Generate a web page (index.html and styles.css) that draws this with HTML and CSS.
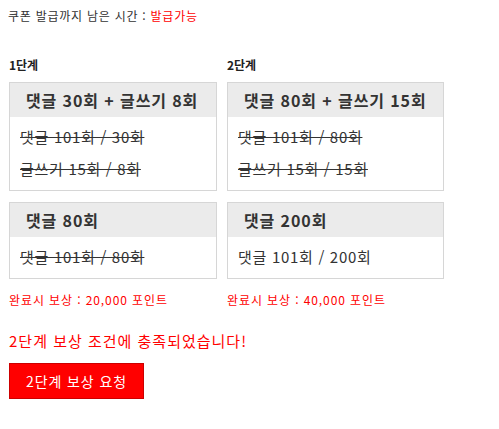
FILE: index.html
```html
<!DOCTYPE html>
<html lang="ko">
<head>
<meta charset="utf-8">
<link rel="stylesheet" href="styles.css">
</head>
<body>
<div class="coupon">쿠폰 발급까지 남은 시간 : <span class="red">발급가능</span></div>
<div class="steps">
  <div class="col col-1">
    <div class="step-title">1단계</div>
    <div class="box">
      <div class="box-head">댓글 30회 + 글쓰기 8회</div>
      <div class="box-body">
        <div class="line done">댓글 101회 / 30회</div>
        <div class="line done">글쓰기 15회 / 8회</div>
      </div>
    </div>
    <div class="box box-2">
      <div class="box-head">댓글 80회</div>
      <div class="box-body">
        <div class="line done">댓글 101회 / 80회</div>
      </div>
    </div>
    <div class="reward">완료시 보상 : 20,000 포인트</div>
  </div>
  <div class="col col-2">
    <div class="step-title">2단계</div>
    <div class="box">
      <div class="box-head">댓글 80회 + 글쓰기 15회</div>
      <div class="box-body">
        <div class="line done">댓글 101회 / 80회</div>
        <div class="line done">글쓰기 15회 / 15회</div>
      </div>
    </div>
    <div class="box box-2">
      <div class="box-head">댓글 200회</div>
      <div class="box-body">
        <div class="line">댓글 101회 / 200회</div>
      </div>
    </div>
    <div class="reward">완료시 보상 : 40,000 포인트</div>
  </div>
</div>
<div class="message">2단계 보상 조건에 충족되었습니다!</div>
<button class="request">2단계 보상 요청</button>
</body>
</html>
```
FILE: styles.css
```css
body {
  margin: 8px;
  font-family: "Noto Sans CJK KR", "Noto Sans", sans-serif;
  color: #333;
  background: #fff;
}
.coupon {
  font-size: 12px;
  line-height: 16px;
  letter-spacing: 0.75px;
  color: #333;
}
.red { color: #f00; }
.steps {
  display: flex;
  gap: 10px;
  margin-top: 33px;
  margin-left: 1px;
}
.col-1 { width: 208px; }
.col-2 { width: 217px; }
.step-title {
  font-size: 12px;
  font-weight: bold;
  line-height: 16px;
  color: #222;
  margin-bottom: 9px;
}
.box {
  border: 1px solid #d6d6d6;
}
.box-2 { margin-top: 11px; }
.box-head {
  height: 34px;
  line-height: 34px;
  background: #ebebeb;
  padding-left: 16px;
  font-size: 16px;
  font-weight: bold;
  letter-spacing: 0.9px;
  color: #333;
}
.box-body {
  padding: 4px 10px 5px;
}
.line {
  font-size: 15px;
  line-height: 32px;
  letter-spacing: 0.7px;
  color: #333;
}
.done { text-decoration: line-through; }
.reward {
  margin-top: 13px;
  font-size: 12px;
  line-height: 16px;
  letter-spacing: 0.9px;
  color: #f00;
}
.message {
  margin-top: 23px;
  margin-left: 1px;
  font-size: 15px;
  line-height: 20px;
  letter-spacing: 1px;
  color: #f00;
}
.request {
  display: block;
  margin-top: 12px;
  margin-left: 1px;
  width: 135px;
  height: 36px;
  padding: 0;
  background: #f00;
  border: 1px solid #c00;
  color: #fff;
  font-family: "Noto Sans CJK KR", "Noto Sans", sans-serif;
  font-size: 14px;
  letter-spacing: 0.9px;
}
```
